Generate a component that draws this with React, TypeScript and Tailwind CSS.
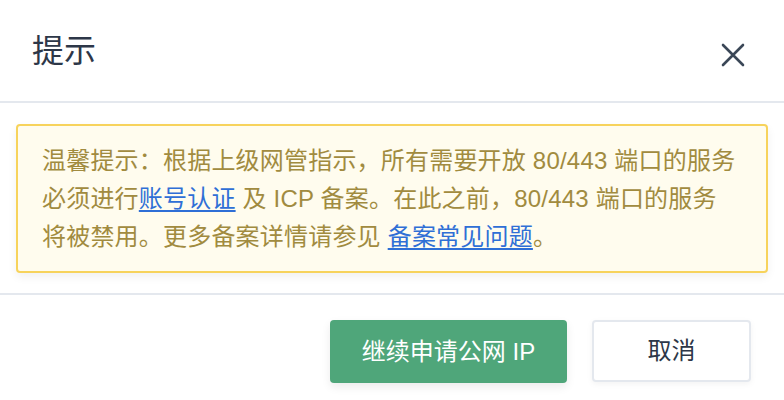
import React from "react";

export default function App() {
  const font = { fontFamily: '"Liberation Sans", "Noto Sans CJK SC", sans-serif' };
  return (
    <div className="w-[784px] h-[400px] bg-white overflow-hidden" style={font}>
      <div className="h-[101px] flex items-center justify-between pl-[32px] pr-[38px]">
        <h1 className="text-[32px] leading-none text-[#2d3748]">提示</h1>
        <button className="w-[26px] h-[26px] flex items-center justify-center mt-[8px]">
          <svg width="24" height="24" viewBox="0 0 24 24" fill="none" stroke="#3b4757" strokeWidth="2.6" strokeLinecap="round">
            <path d="M2 2L22 22M22 2L2 22" />
          </svg>
        </button>
      </div>
      <div className="h-[2px] bg-[#e4e8ee]" />
      <div className="px-4 pt-[21px] pb-[20px]">
        <div className="border-2 border-[#f7d35c] bg-[#fffcee] rounded-[4px] px-6 pt-[16px] pb-[15px] text-[24px] leading-[38px] text-[#a18b3f] shadow-[0_4px_10px_rgba(0,0,0,0.06)] tracking-[0.2px]">
          <p>
            温馨提示：根据上级网管指示，所有需要开放 80/443 端口的服务
            <br />
            必须进行
            <a className="text-[#2f6fd6] underline underline-offset-[3px] decoration-[2px]">账号认证</a>
            {" "}及 ICP 备案。在此之前，80/443 端口的服务
            <br />
            将被禁用。更多备案详情请参见{" "}
            <a className="text-[#2f6fd6] underline underline-offset-[3px] decoration-[2px]">备案常见问题</a>。
          </p>
        </div>
      </div>
      <div className="h-[2px] bg-[#e4e8ee]" />
      <div className="flex justify-end gap-[25px] pt-[25px] pr-[33px]">
        <button className="w-[237px] h-[63px] rounded-[4px] bg-[#4fa67a] text-white text-[24px] shadow-[0_4px_10px_rgba(0,0,0,0.08)]">
          继续申请公网 IP
        </button>
        <button className="w-[159px] h-[62px] rounded-[4px] bg-white border-2 border-[#e4e8ee] text-[#2d3748] text-[24px] shadow-[0_2px_6px_rgba(0,0,0,0.05)]">
          取消
        </button>
      </div>
    </div>
  );
}
